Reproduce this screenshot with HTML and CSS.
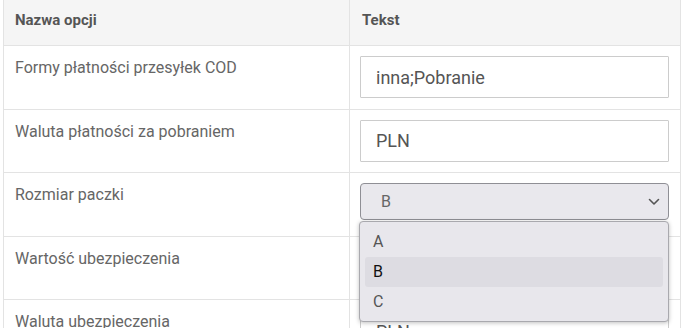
FILE: index.html
```html
<!DOCTYPE html>
<html lang="pl">

<head>
  <meta charset="UTF-8">
  <meta name="viewport" content="width=device-width, initial-scale=1.0">
  <title>Opcje przesyłki</title>
  <link rel="stylesheet" href="styles.css">
</head>

<body>
  <div class="wrapper">
    <table class="options">
      <thead>
        <tr>
          <th class="name">Nazwa opcji</th>
          <th>Tekst</th>
        </tr>
      </thead>
      <tbody>
        <tr>
          <td class="name">Formy płatności przesyłek COD</td>
          <td><input class="field" type="text" value="inna;Pobranie"></td>
        </tr>
        <tr>
          <td class="name">Waluta płatności za pobraniem</td>
          <td><input class="field" type="text" value="PLN"></td>
        </tr>
        <tr>
          <td class="name">Rozmiar paczki</td>
          <td class="select-cell">
            <div class="select">
              <span>B</span>
              <svg class="chevron" width="12" height="8" viewBox="0 0 12 8">
                <path d="M1.5 1.5 L6 6 L10.5 1.5" fill="none" stroke="#555" stroke-width="1.6" stroke-linecap="round" stroke-linejoin="round" />
              </svg>
            </div>
            <ul class="menu">
              <li>A</li>
              <li class="active">B</li>
              <li>C</li>
            </ul>
          </td>
        </tr>
        <tr>
          <td class="name">Wartość ubezpieczenia</td>
          <td><input class="field" type="text" value=""></td>
        </tr>
        <tr>
          <td class="name">Waluta ubezpieczenia</td>
          <td><input class="field" type="text" value="PLN"></td>
        </tr>
      </tbody>
    </table>
  </div>
</body>

</html>
```

FILE: styles.css
```css
body {
  margin: 0;
  font-family: Roboto, "Liberation Sans", sans-serif;
  background: #fff;
  overflow: hidden;
}

.wrapper {
  padding-left: 3px;
}

.options {
  width: 678px;
  border-collapse: collapse;
  table-layout: fixed;
}

.options th,
.options td {
  border: 1px solid #e3e3e3;
  border-top: none;
  text-align: left;
  vertical-align: top;
  padding: 10px 11px 10px 10px;
}

.options th {
  height: 25px;
  padding: 11px 12px 9px 12px;
  color: #555;
  font-size: 15px;
  font-weight: bold;
  background: #f5f5f5;
}

.options .name {
  width: 322px;
  padding-left: 11px;
}

.options td.name {
  color: #666;
  font-size: 16px;
  line-height: 22px;
  padding-top: 11px;
  height: 41.5px;
}

.field {
  display: block;
  box-sizing: border-box;
  width: 100%;
  height: 42px;
  padding: 0 15px;
  border: 1px solid #ccc;
  border-radius: 1px;
  color: #555;
  font-family: inherit;
  font-size: 18px;
  outline: none;
}

.select-cell {
  position: relative;
}

.select {
  box-sizing: border-box;
  display: flex;
  align-items: center;
  justify-content: space-between;
  height: 37px;
  width: 100%;
  padding: 0 8px 0 20px;
  border: 1px solid #8f8f95;
  border-radius: 4px;
  background: #e9e8ed;
  color: #666;
  font-size: 16px;
}

.menu {
  position: absolute;
  left: 9px;
  top: 48px;
  z-index: 2;
  box-sizing: border-box;
  width: 310px;
  height: 101px;
  margin: 0;
  padding: 5px 5px;
  list-style: none;
  border: 1px solid #a9a9ae;
  border-radius: 4px;
  background: #e8e7ec;
  box-shadow: 0 1px 4px rgba(0, 0, 0, 0.25);
}

.menu li {
  height: 30px;
  line-height: 30px;
  padding-left: 8px;
  color: #555;
  font-size: 16px;
  border-radius: 3px;
}

.menu li.active {
  background: #dddce2;
  color: #111;
}
```
